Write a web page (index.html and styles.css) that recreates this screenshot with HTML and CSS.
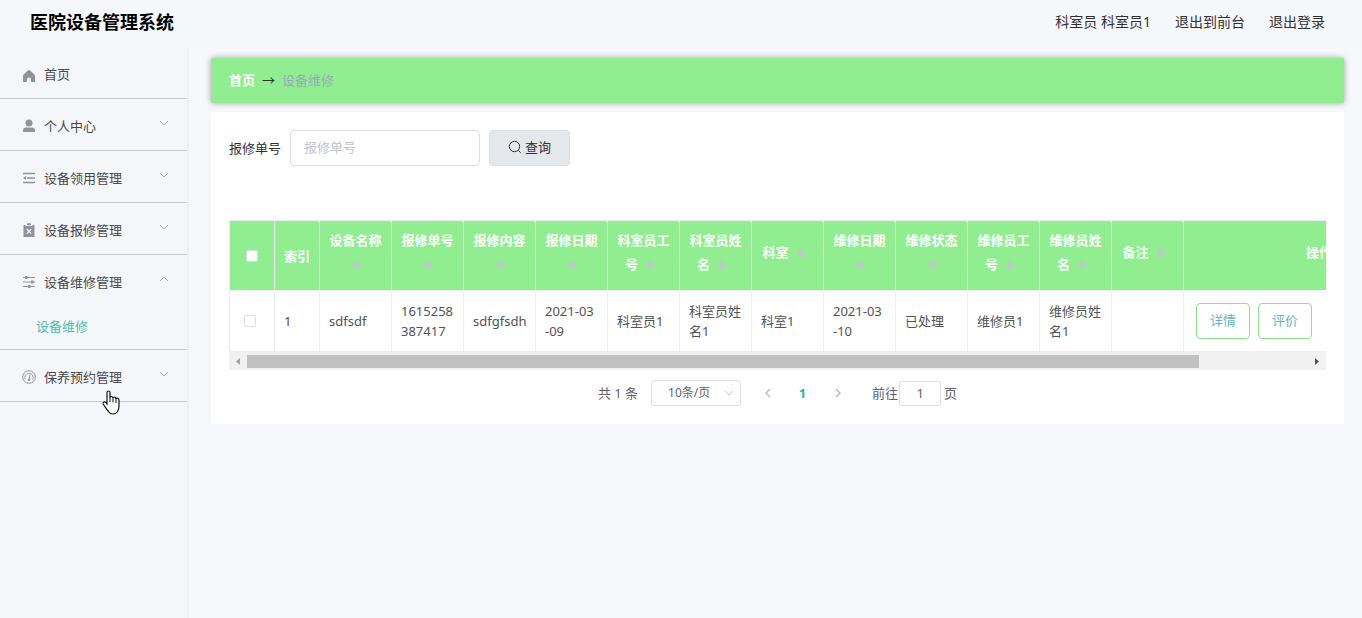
FILE: index.html
```html
<!DOCTYPE html>
<html lang="zh-CN">
<head>
<meta charset="utf-8">
<title>医院设备管理系统</title>
<link rel="stylesheet" href="styles.css">
</head>
<body>
<svg class="defs" aria-hidden="true">
  <symbol id="down" viewBox="0 0 10 6"><path d="M1 1l4 4 4-4" fill="none" stroke="currentColor"/></symbol>
  <symbol id="sort" viewBox="0 0 10 12"><path d="M.5 5.500L5 1l4.500 4.500zM.5 6.500h9L5 11z" fill="currentColor"/></symbol>
</svg>
<header class="topbar">
  <h1 class="brand">医院设备管理系统</h1>
  <nav class="account">
    <span>科室员 科室员1</span>
    <a href="#">退出到前台</a>
    <a href="#">退出登录</a>
  </nav>
</header>
<div class="shell">
  <nav class="sidebar">
    <ul class="menu">
      <li><a class="item" href="#">
        <svg class="icon icon-home" viewBox="0 0 14 14"><path d="M7 1Q7.600 1 8.300 1.700L12.400 5.500Q13 6.100 13 7V13H9V10.500Q9 8.500 7 8.500T5 10.500V13H1V7Q1 6.100 1.600 5.500L5.700 1.700Q6.400 1 7 1z" fill="currentColor"/></svg>
        <span class="name">首页</span></a></li>
      <li><a class="item sub" href="#">
        <svg class="icon" viewBox="0 0 14 14"><circle cx="7" cy="4" r="3.500" fill="currentColor"/><path d="M1 13v-1.500Q1 8.600 4 8.600h6q3 0 3 2.900V13z" fill="currentColor"/></svg>
        <span class="name">个人中心</span><svg class="chev"><use href="#down"/></svg></a></li>
      <li><a class="item sub" href="#">
        <svg class="icon" viewBox="0 0 14 14"><path d="M1 2.500h12M5 7h8M1 11.500h12" fill="none" stroke="currentColor" stroke-width="1.600"/><path d="M1 7l3-2v4z" fill="currentColor"/></svg>
        <span class="name">设备领用管理</span><svg class="chev"><use href="#down"/></svg></a></li>
      <li><a class="item sub" href="#">
        <svg class="icon" viewBox="0 0 14 14"><path d="M1.500 2h2v1.500h7V2h2v12h-11zM1.500 3h11v11h-11zM5 .3h4v2H5z" fill="currentColor"/><path d="M4.800 6l4.400 4.600M9.200 6l-4.400 4.600" stroke="#f5f6fa" stroke-width="1.200"/></svg>
        <span class="name">设备报修管理</span><svg class="chev"><use href="#down"/></svg></a></li>
      <li><a class="item sub open" href="#">
        <svg class="icon" viewBox="0 0 14 14"><path d="M1 2.500h12M1 7h12M1 11.500h12" stroke="currentColor" stroke-width="1.200"/><path d="M3 1h2.500v3H3zM9 5.500h2.500v3H9zM6 10h2.500v3H6z" fill="currentColor"/></svg>
        <span class="name">设备维修管理</span><svg class="chev up"><use href="#down"/></svg></a>
        <a class="subitem" href="#">设备维修</a></li>
      <li><a class="item sub" href="#">
        <svg class="icon" viewBox="0 0 14 14"><g fill="none" stroke="currentColor"><circle cx="7" cy="7" r="6.300"/><path d="M3.300 9.500A4.200 4.200 0 1 1 10.700 9.500M7.200 9.200L8 4.500" stroke-width=".9"/></g><circle cx="7" cy="9.800" r="1.300" fill="currentColor"/></svg>
        <span class="name">保养预约管理</span><svg class="chev"><use href="#down"/></svg></a></li>
    </ul>
  </nav>
  <main class="content">
    <nav class="crumbs"><a href="#">首页</a><span class="arrow">→</span><span class="here">设备维修</span></nav>
    <section class="card">
      <form class="search">
        <label for="order">报修单号</label>
        <input class="field" id="order" type="text" placeholder="报修单号">
        <button class="query" type="button"><svg viewBox="0 0 14 14"><circle cx="6.500" cy="6.500" r="5.200" fill="none" stroke="currentColor"/><path d="M10.300 10.300l2.400 2.400" stroke="currentColor"/></svg>查询</button>
      </form>
      <div class="table-wrap">
        <table class="grid">
          <colgroup><col class="narrow" span="2"><col class="data" span="12"><col class="ops"></colgroup>
          <thead><tr>
            <th><input class="check" type="checkbox" aria-label="全选"></th>
            <th>索引</th>
            <th>设备名称<svg class="sort"><use href="#sort"/></svg></th>
            <th>报修单号<svg class="sort"><use href="#sort"/></svg></th>
            <th>报修内容<svg class="sort"><use href="#sort"/></svg></th>
            <th>报修日期<svg class="sort"><use href="#sort"/></svg></th>
            <th>科室员工号<svg class="sort"><use href="#sort"/></svg></th>
            <th>科室员姓名<svg class="sort"><use href="#sort"/></svg></th>
            <th>科室<svg class="sort"><use href="#sort"/></svg></th>
            <th>维修日期<svg class="sort"><use href="#sort"/></svg></th>
            <th>维修状态<svg class="sort"><use href="#sort"/></svg></th>
            <th>维修员工号<svg class="sort"><use href="#sort"/></svg></th>
            <th>维修员姓名<svg class="sort"><use href="#sort"/></svg></th>
            <th>备注<svg class="sort"><use href="#sort"/></svg></th>
            <th>操作</th>
          </tr></thead>
          <tbody><tr>
            <td class="pick"><input class="check" type="checkbox" aria-label="选择第1行"></td>
            <td>1</td><td>sdfsdf</td><td>1615258387417</td><td>sdfgfsdh</td><td>2021-03<br>-09</td>
            <td>科室员1</td><td>科室员姓名1</td><td>科室1</td><td>2021-03<br>-10</td><td>已处理</td>
            <td>维修员1</td><td>维修员姓名1</td><td></td>
            <td><div class="actions"><button type="button">详情</button><button type="button">评价</button></div></td>
          </tr></tbody>
        </table>
      </div>
      <div class="scrollbar" aria-hidden="true">
        <svg class="step off" viewBox="0 0 18 18"><path d="M11 6v7L7 9.500z" fill="currentColor"/></svg>
        <div class="track"><div class="thumb"></div></div>
        <svg class="step" viewBox="0 0 18 18"><path d="M7 6v7l4-3.500z" fill="currentColor"/></svg>
      </div>
      <div class="pager">
        <span class="total">共 1 条</span>
        <span class="size"><select aria-label="每页条数"><option>10条/页</option></select><svg class="chev"><use href="#down"/></svg></span>
        <button class="turn" type="button" aria-label="上一页"><svg viewBox="0 0 8 10"><path d="M6 1L2 5l4 4" fill="none" stroke="currentColor" stroke-width="1.400"/></svg></button>
        <button class="turn current" type="button">1</button>
        <button class="turn" type="button" aria-label="下一页"><svg viewBox="0 0 8 10"><path d="M2 1l4 4-4 4" fill="none" stroke="currentColor" stroke-width="1.400"/></svg></button>
        <label class="jump">前往<input type="text" value="1">页</label>
      </div>
    </section>
  </main>
</div>
<svg class="pointer" viewBox="0 0 18 25" aria-hidden="true"><path d="M5 14V2.500Q5 1 6.500 1T8 2.500V8Q8 6.500 9.500 6.500T11 8.500Q11 7 12.300 7T14 9Q14.200 8 15.500 8.200T17 10V16Q17 19 15.500 21.500Q14 24 11 24T6.500 21.500Q5 20 3.500 17.500L1.200 14Q.8 12.500 2 12T5 14z" fill="#fff" stroke="#111" stroke-width="1.200"/><path d="M8 8v4M11 8.500V12.500M14 9v4" stroke="#111"/></svg>
</body>
</html>
```
FILE: styles.css
```css
* { box-sizing: border-box; }
body {
  margin: 0;
  min-height: 100vh;
  display: flex;
  flex-direction: column;
  background: #f7f8fb;
  color: #303133;
  font: 13px/20px "Noto Sans", "Noto Sans CJK SC", sans-serif;
}
button, input, select { font: inherit; color: inherit; margin: 0; }
a { color: inherit; text-decoration: none; }
.defs { display: none; }

.topbar {
  height: 48px;
  display: flex;
  align-items: center;
  justify-content: space-between;
  padding: 0 37px 4px 30px;
  background: #f5f7fb;
}
.brand { margin: 0; font-size: 18px; line-height: 24px; color: #000; }
.account { display: flex; gap: 24px; font-size: 14px; }

.shell { flex: 1; display: flex; }
.sidebar { flex: none; width: 189px; background: #f5f6fa; border-right: 2px solid #eef0f3; }
.menu { list-style: none; margin: 0; padding: 0; }
.menu li { border-bottom: 1px solid #c8cad0; }
.item { display: flex; align-items: center; height: 50px; padding: 1px 18px 0 22px; color: #45484d; }
.item.sub { height: 51px; padding-top: 2px; }
.icon { width: 14px; height: 14px; margin-right: 8px; color: #909399; }
.icon-home { margin-top: 4px; }
.name { flex: 1; }
.chev { width: 10px; height: 6px; color: #a0a3a9; }
.item .chev { margin-bottom: 6px; }
.up { transform: rotate(180deg); }
.subitem { display: block; height: 43px; padding: 10px 0 0 36px; color: #4bbfae; }

.content { flex: 1; min-width: 0; padding: 10px 18px 24px 22px; }
.crumbs {
  display: flex;
  align-items: center;
  height: 45px;
  padding: 0 18px 2px;
  border-radius: 2px;
  background: #90ee90;
  box-shadow: 0 0 6px rgba(0, 0, 0, .35);
}
.crumbs a { color: #fff; font-weight: bold; }
.arrow { margin: 0 7px; }
.here { color: #97a8be; }
.card { margin-top: 9px; padding: 18px; background: #fff; }

.search { display: flex; align-items: center; }
.field { width: 190px; height: 36px; margin: 0 9px; padding: 0 13px 2px; border: 1px solid #dcdfe6; border-radius: 4px; background: #fff; }
.field::placeholder { color: #c0c4cc; opacity: 1; }
.query {
  display: flex;
  align-items: center;
  justify-content: center;
  gap: 3px;
  width: 81px;
  height: 36px;
  padding: 0 0 2px;
  border: 1px solid #dcdfe6;
  border-radius: 4px;
  background: #e4e7eb;
}
.query svg { width: 14px; height: 14px; }

.table-wrap { margin-top: 54px; overflow: hidden; border-left: 1px solid #ebeef5; border-top: 1px solid #ebeef5; }
.grid { table-layout: fixed; width: 1225px; border-collapse: separate; border-spacing: 0; color: #505256; }
.narrow { width: 45px; }
.data { width: 72px; }
.ops { width: 271px; }
.grid th { height: 70px; padding: 7px 9px 14px; border: solid #ebeef5; border-width: 0 1px 1px 0; background: #90ee90; color: #fff; line-height: 24px; }
.grid td { height: 61px; padding: 10px 4px 10px 9px; border: solid #ebeef5; border-width: 0 1px 1px 0; word-break: break-all; }
.grid th:nth-child(-n+2) { padding: 0; }
.grid td.pick { padding: 0 14px; }
.sort { display: inline-block; width: 24px; height: 12px; vertical-align: middle; color: #c0c4cc; }
.check { display: block; width: 12px; height: 12px; appearance: none; border: 1px solid #dcdfe6; border-radius: 2px; background: #fff; }
th .check { margin: 0 auto; }
.actions { display: flex; gap: 8px; padding-left: 3px; }
.actions button { width: 54px; height: 36px; padding: 0 0 2px; border: 1px solid #90de90; border-radius: 4px; background: #fff; color: #62b5c8; }

.scrollbar { display: flex; height: 18px; background: #f1f1f1; }
.step { width: 18px; height: 18px; color: #505050; }
.off { color: #a3a3a3; }
.track { flex: 1; padding: 3px 0 2px; }
.thumb { width: calc(90% - 3px); height: 13px; background: #c1c1c1; }

.pager { display: flex; align-items: center; justify-content: center; margin-top: 10px; color: #606266; }
.size { position: relative; width: 90px; height: 26px; margin: 0 9px 0 13px; }
.size select { width: 100%; height: 100%; padding: 0 0 0 16px; appearance: none; border: 1px solid #dcdfe6; border-radius: 3px; background: #fff; font-size: 12px; }
.size .chev { position: absolute; right: 7px; top: 10px; color: #c0c4cc; }
.turn { display: flex; align-items: center; justify-content: center; width: 35px; height: 26px; padding: 0; border: 0; background: none; color: #b4b8bf; }
.turn svg { width: 8px; height: 10px; }
.current { color: #1fb89a; font-weight: bold; }
.jump { display: flex; align-items: center; margin-left: 17px; }
.jump input { width: 42px; height: 25px; margin: 0 3px 0 1px; padding: 0; border: 1px solid #dcdfe6; border-radius: 3px; text-align: center; }

.pointer { position: absolute; left: 102px; top: 390px; width: 18px; height: 25px; }
```
